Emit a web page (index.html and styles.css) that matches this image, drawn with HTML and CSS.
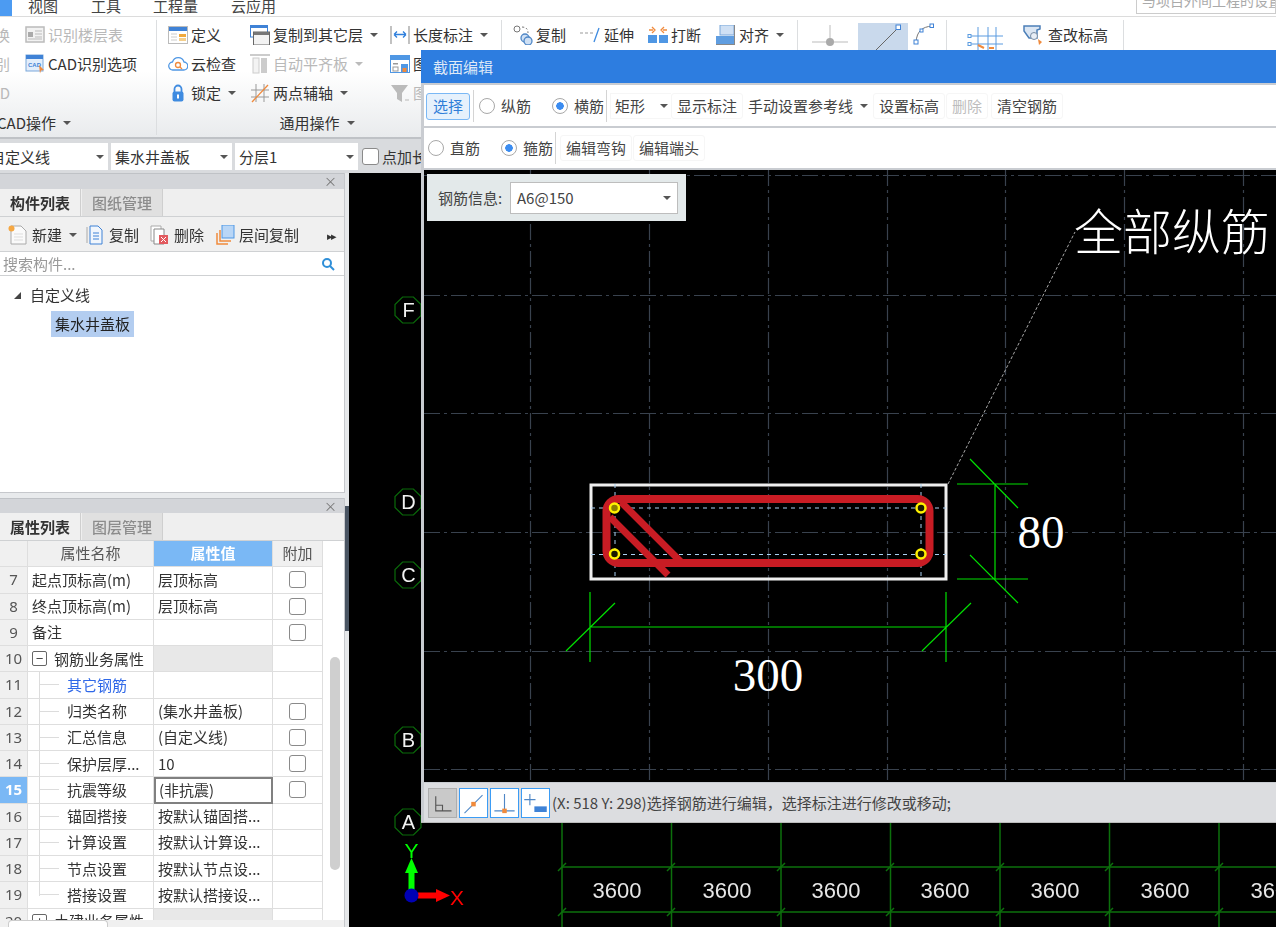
FILE: index.html
```html
<!DOCTYPE html>
<html lang="zh-CN">
<head>
<meta charset="utf-8">
<title>截面编辑</title>
<link rel="stylesheet" href="styles.css">
</head>
<body>
<div class="page">
  <header class="menubar">
    <span class="menu-active"></span>
    <span class="menu-item m1">视图</span>
    <span class="menu-item m2">工具</span>
    <span class="menu-item m3">工程量</span>
    <span class="menu-item m4">云应用</span>
    <span class="top-search">与项目外间工程的设置</span>
  </header>

  <section class="ribbon">
    <div class="group g1">
      <div class="rows rows-g1">
        <span class="cut off">换</span>
        <span class="item off"><svg class="ico" viewBox="0 0 20 20"><rect x="1" y="2" width="18" height="15" fill="#f2f2f2" stroke="#bbb" stroke-width="1.5"/><rect x="3" y="7" width="5" height="5" fill="#aaa"/><path d="M10 6h7M10 9h7M10 12h7M3 14h14" stroke="#bbb"/></svg>识别楼层表</span>
        <span class="cut off">别</span>
        <span class="item"><svg class="ico" viewBox="0 0 20 20"><rect x="1" y="1" width="17" height="16" fill="#e3eefb" stroke="#7aa7da"/><rect x="1" y="1" width="17" height="4" fill="#3f82d6"/><text x="3" y="13" class="svg-cad">CAD</text><path d="M14 11l5 5-3 .5-1 3z" fill="#f08a3c"/></svg>CAD识别选项</span>
        <span class="cut off">D</span>
      </div>
      <div class="group-title g1-title">CAD操作<i class="caret"></i></div>
    </div>

    <div class="group g2">
      <div class="rows rows-g2">
        <span class="item"><svg class="ico" viewBox="0 0 20 20"><rect x=".5" y="1.5" width="19" height="17" fill="#fff" stroke="#bbb"/><rect x="1" y="2" width="18" height="4" fill="#3f82d6"/><path d="M3 9h6M3 12h6M3 15h6" stroke="#ccc"/><rect x="11" y="9" width="7" height="3" fill="#f0a93c"/><rect x="11" y="13" width="7" height="3" fill="#f4cf8c"/></svg>定义</span>
        <span class="item"><svg class="ico" viewBox="0 0 20 20"><rect x=".5" y="0" width="17" height="12" fill="#fff" stroke="#3f82d6"/><rect x="1" y="0" width="16" height="3" fill="#3f82d6"/><rect x="3.5" y="7" width="16" height="13" fill="#f3f3f3" stroke="#666"/><rect x="4" y="7" width="15" height="3" fill="#777"/></svg>复制到其它层<i class="caret"></i></span>
        <span class="item"><svg class="ico" viewBox="0 0 20 20"><path d="M1 1v18M19 1v18" stroke="#999" stroke-width="1.2"/><path d="M4 9.500h12M4 9.500l3-3M4 9.500l3 3M16 9.500l-3-3M16 9.500l-3 3" stroke="#2f7fdc" stroke-width="1.3" fill="none"/></svg>长度标注<i class="caret"></i></span>

        <span class="item"><svg class="ico" viewBox="0 0 20 20"><path d="M5 16a4 4 0 0 1-.5-8 6 6 0 0 1 11.500 0 4 4 0 0 1-.5 8z" fill="#fff" stroke="#4f97e4" stroke-width="1.3"/><circle cx="10" cy="11" r="2.500" fill="none" stroke="#f08a3c" stroke-width="1.300"/><path d="M12 13l2 2" stroke="#f08a3c" stroke-width="1.300"/></svg>云检查</span>
        <span class="item off"><svg class="ico" viewBox="0 0 20 20"><path d="M0 1h20" stroke="#ccc" stroke-width="2"/><rect x="3" y="4" width="6" height="15" fill="#f3f3f3" stroke="#ccc"/><rect x="11" y="4" width="6" height="15" fill="#ccc"/></svg>自动平齐板<i class="caret light"></i></span>
        <span class="item"><svg class="ico" viewBox="0 0 20 20"><rect x=".5" y="1.500" width="19" height="17" fill="#fff" stroke="#4f97e4"/><rect x="1" y="2" width="18" height="4" fill="#4f97e4"/><rect x="3" y="9" width="5" height="1.500" fill="#999"/><rect x="3" y="13" width="5" height="4" fill="none" stroke="#999"/><rect x="11" y="10" width="7" height="8" fill="#4f97e4"/><rect x="12.500" y="14" width="4" height="4" fill="#f08a3c"/></svg>图</span>

        <span class="item"><svg class="ico" viewBox="0 0 20 20"><path d="M6.500 9V6a3.500 3.500 0 0 1 7 0v3" fill="none" stroke="#3f8be0" stroke-width="1.800"/><rect x="4.500" y="8.500" width="11" height="10" rx="2" fill="#3f8be0"/><rect x="9" y="11.500" width="2" height="4" fill="#fff"/></svg>锁定<i class="caret"></i></span>
        <span class="item"><svg class="ico" viewBox="0 0 20 20"><path d="M6 1v18M14 1v18M1 7h18M1 14h18" stroke="#999" fill="none"/><path d="M2 19L18 2" stroke="#f08a3c" stroke-width="1.300"/></svg>两点辅轴<i class="caret"></i></span>
        <span class="item off"><svg class="ico" viewBox="0 0 20 20"><path d="M1 2h17l-6 8v9l-5-3v-6z" fill="#bbb"/><path d="M15 17h4" stroke="#ccc" stroke-width="1.500"/></svg>图</span>
      </div>
      <div class="group-title">通用操作<i class="caret"></i></div>
    </div>

    <div class="group g3">
      <div class="single">
        <span class="item w-copy"><svg class="ico" viewBox="0 0 20 20"><circle cx="4" cy="4" r="3" fill="#fff" stroke="#777"/><path d="M9 2c4 0 6 2 6 6" stroke="#777" fill="none" stroke-dasharray="2 2"/><circle cx="12" cy="13" r="4" fill="#cfe0f4" stroke="#4f87c6" stroke-width="1.300"/><circle cx="15" cy="16" r="4" fill="#cfe0f4" stroke="#4f87c6" stroke-width="1.300"/></svg>复制</span>
        <span class="item w-ext"><svg class="ico wide" viewBox="0 0 21 20"><path d="M0 8h13" stroke="#999" stroke-dasharray="3 2"/><path d="M14 17l5-14" stroke="#3f8be0" stroke-width="1.300"/></svg>延伸</span>
        <span class="item w-brk"><svg class="ico" viewBox="0 0 20 20"><rect x="0" y="10" width="9" height="8" fill="#4f97e4"/><rect x="11" y="10" width="9" height="8" fill="#4f97e4"/><path d="M1 5h4M15 5h4" stroke="#f08a3c" stroke-width="1.500"/><path d="M4 2l3 3-3 3M16 2l-3 3 3 3" fill="none" stroke="#f08a3c" stroke-width="1.300"/></svg>打断</span>
        <span class="item"><svg class="ico" viewBox="0 0 20 20"><rect x="4" y="0" width="14" height="10" fill="#cfe0f4" stroke="#7aa7da"/><rect x="0" y="11" width="18" height="9" fill="#5f9de0"/><path d="M0 19.500h19M18.500 0v20" stroke="#888"/></svg>对齐<i class="caret"></i></span>
      </div>
    </div>

    <div class="group g4">
      <div class="single shapes">
        <svg class="shape-a" viewBox="0 0 38 30"><path d="M18 5v17M0 22h36" stroke="#bbb"/><circle cx="18" cy="22" r="4" fill="#aaa"/></svg>
        <span class="shape-on"><svg viewBox="0 0 50 30"><path d="M15 30L40 5" stroke="#666"/><rect x="38" y="2" width="4.500" height="4.500" fill="#fff" stroke="#3f82d6"/></svg></span>
        <svg class="shape-c" viewBox="0 0 22 22"><path d="M3 19C4 8 9 4 19 3" fill="none" stroke="#777"/><rect x="1" y="17" width="4" height="4" fill="#fff" stroke="#3f82d6"/><rect x="7" y="6" width="3" height="3" fill="#fff" stroke="#3f82d6"/><rect x="17" y="1" width="3.500" height="3.500" fill="#fff" stroke="#3f82d6"/></svg>
      </div>
    </div>

    <div class="group g5">
      <div class="single">
        <svg class="grid-ico" viewBox="0 0 40 30"><path d="M12 7v23M22 7v23M30 7v23M5 16h32M5 24h32" stroke="#5b9be0" fill="none"/><rect x="2" y="14.500" width="3" height="3" fill="#fff" stroke="#5b9be0"/><rect x="2" y="22.500" width="3" height="3" fill="#fff" stroke="#5b9be0"/><path d="M12 25l6 3M23 28h5" stroke="#f08a3c" stroke-width="2"/></svg>
        <span class="item"><svg class="ico" viewBox="0 0 20 20"><path d="M1 1h16v3l-3 1v8H6L1 6z" fill="#dbe6f3" stroke="#4c7fb8" stroke-width="1.500"/><circle cx="11" cy="11" r="3.500" fill="#e8eef6" stroke="#7a8da3"/><path d="M15 14l4 3-3 3z" fill="#f08a3c"/></svg>查改标高</span>
      </div>
    </div>
  </section>

  <section class="selectors">
    <span class="select s1"><span class="cutleft">自定义线</span><i class="caret"></i></span>
    <span class="select s2"><span>集水井盖板</span><i class="caret"></i></span>
    <span class="select s3"><span>分层1</span><i class="caret"></i></span>
    <span class="check sel-check"></span>
    <span class="sel-label">点加长度</span>
  </section>

  <main class="workspace">
    <aside class="side">
      <div class="panel panel-top">
        <div class="panel-head">×</div>
        <div class="tabs"><span class="tab active">构件列表</span><span class="tab">图纸管理</span></div>
        <div class="tools">
          <span class="tool"><svg class="ico" viewBox="0 0 20 20"><path d="M3 1h10l5 5v13H3z" fill="#fafafa" stroke="#aaa"/><path d="M6 9h9M6 12h9M6 15h9" stroke="#ddd"/><circle cx="3.500" cy="3.500" r="3" fill="#f5a742"/></svg>新建<i class="caret"></i></span>
          <span class="tool tool-wide"><svg class="ico" viewBox="0 0 20 20"><path d="M2 2v16" stroke="#aaa"/><path d="M5 1h8l4 4v14H5z" fill="#f1f6fc" stroke="#3f82d6"/><path d="M8 8h6M8 11h6M8 14h6" stroke="#3f82d6"/></svg>复制</span>
          <span class="tool tool-wide"><svg class="ico" viewBox="0 0 20 20"><path d="M1 1h10v15H1z" fill="#fff" stroke="#aaa"/><path d="M4 4h10v15H4z" fill="#fff" stroke="#888"/><rect x="9" y="10" width="9" height="9" fill="#e2595e"/><path d="M11 12l5 5M16 12l-5 5" stroke="#fff"/></svg>删除</span>
          <span class="tool"><svg class="ico" viewBox="0 0 20 20"><rect x="7" y="0" width="12" height="13" fill="#b9d6f6" stroke="#4f97e4"/><path d="M5 5v11h11M2 8v11h11" fill="none" stroke="#f08a3c" stroke-width="1.500"/></svg>层间复制</span>
          <span class="more">▸▸</span>
        </div>
        <div class="search"><span>搜索构件...</span><svg viewBox="0 0 14 14" class="search-ico"><circle cx="6" cy="6" r="4" fill="none" stroke="#2f8fd8" stroke-width="2"/><path d="M9 9l4 4" stroke="#2f8fd8" stroke-width="2"/></svg></div>
        <div class="tree">
          <div class="tree-root"><i class="tree-arrow"></i>自定义线</div>
          <div class="tree-leaf">集水井盖板</div>
        </div>
      </div>

      <div class="panel panel-bottom">
        <div class="panel-head">×</div>
        <div class="tabs"><span class="tab active">属性列表</span><span class="tab">图层管理</span></div>
        <div class="table-wrap">
          <div class="prop-table">
            <div class="th num"></div><div class="th">属性名称</div><div class="th th-on">属性值</div><div class="th">附加</div>

            <div class="num">7</div><div class="td">起点顶标高(m)</div><div class="td">层顶标高</div><div class="td mid"><span class="check"></span></div>
            <div class="num">8</div><div class="td">终点顶标高(m)</div><div class="td">层顶标高</div><div class="td mid"><span class="check"></span></div>
            <div class="num">9</div><div class="td">备注</div><div class="td"></div><div class="td mid"><span class="check"></span></div>
            <div class="num">10</div><div class="td"><span class="toggle">−</span>钢筋业务属性</div><div class="td shade"></div><div class="td"></div>
            <div class="num">11</div><div class="td sub link">其它钢筋</div><div class="td"></div><div class="td"></div>
            <div class="num">12</div><div class="td sub">归类名称</div><div class="td">(集水井盖板)</div><div class="td mid"><span class="check"></span></div>
            <div class="num">13</div><div class="td sub">汇总信息</div><div class="td">(自定义线)</div><div class="td mid"><span class="check"></span></div>
            <div class="num">14</div><div class="td sub">保护层厚...</div><div class="td">10</div><div class="td mid"><span class="check"></span></div>
            <div class="num num-on">15</div><div class="td sub">抗震等级</div><div class="td cell-on">(非抗震)</div><div class="td mid"><span class="check"></span></div>
            <div class="num">16</div><div class="td sub">锚固搭接</div><div class="td">按默认锚固搭...</div><div class="td"></div>
            <div class="num">17</div><div class="td sub">计算设置</div><div class="td">按默认计算设...</div><div class="td"></div>
            <div class="num">18</div><div class="td sub">节点设置</div><div class="td">按默认节点设...</div><div class="td"></div>
            <div class="num">19</div><div class="td sub sub-last">搭接设置</div><div class="td">按默认搭接设...</div><div class="td"></div>
            <div class="num">20</div><div class="td"><span class="toggle">+</span>土建业务属性</div><div class="td shade"></div><div class="td"></div>
          </div>
          <div class="vscroll"><span class="thumb"></span></div>
        </div>
        <div class="hscroll"><span class="hthumb"></span></div>
      </div>
    </aside>
    <div class="splitter"><span class="split-top"></span><span class="split-handle"></span></div>

    <div class="cad">
      <svg class="cad-svg" viewBox="349 172 927 755" aria-label="轴网">
        <defs><polygon id="oct" points="-5.400,-13 5.400,-13 13,-5.400 13,5.400 5.400,13 -5.400,13 -13,5.400 -13,-5.400"/></defs>
        <g class="axis-hex">
          <use href="#oct" x="408" y="310"/>
          <use href="#oct" x="408" y="502"/>
          <use href="#oct" x="408" y="575"/>
          <use href="#oct" x="408" y="740"/>
          <use href="#oct" x="408" y="822"/>
        </g>
        <g class="axis-label">
          <text x="408.500" y="317">F</text><text x="408.500" y="509">D</text><text x="408.500" y="582">C</text><text x="408.500" y="747">B</text><text x="408.500" y="829">A</text>
        </g>
        <g class="grid-green">
          <path d="M562 822V927M671.500 822V927M781 822V927M890.500 822V927M1000 822V927M1109.500 822V927M1219 822V927M562 867H1276M562 912H1276"/>
          <path d="M558 871l8-8M667 871l8-8M777 871l8-8M886 871l8-8M996 871l8-8M1105 871l8-8M1215 871l8-8M558 916l8-8M667 916l8-8M777 916l8-8M886 916l8-8M996 916l8-8M1105 916l8-8M1215 916l8-8"/>
        </g>
        <g class="dim-text">
          <text x="617" y="898">3600</text><text x="727" y="898">3600</text><text x="836" y="898">3600</text><text x="945" y="898">3600</text><text x="1055" y="898">3600</text><text x="1165" y="898">3600</text><text x="1275" y="898">3600</text>
        </g>
        <path d="M411.500 892V872" class="axis-y"/>
        <polygon points="411.500,858 418,873 405,873" class="fill-green"/>
        <path d="M418 895.500H436" class="axis-x"/>
        <polygon points="450,895.500 436,889 436,902" class="fill-red"/>
        <circle cx="411.500" cy="895.500" r="7" class="fill-blue"/>
        <text x="411.500" y="858" class="axis-y-label">Y</text>
        <text x="457" y="905" class="axis-x-label">X</text>
      </svg>
    </div>
  </main>

  <div class="dialog">
    <div class="dlg-title">截面编辑</div>
    <div class="dlg-bar">
      <button class="btn btn-on">选择</button>
      <i class="vsep v1"></i>
      <span class="radio"><i></i>纵筋</span>
      <span class="radio radio-on"><i></i>横筋</span>
      <i class="vsep v2"></i>
      <span class="shape-select"><span>矩形</span><i class="caret"></i></span>
      <button class="btn">显示标注</button>
      <span class="btn-menu">手动设置参考线<i class="caret"></i></span>
      <button class="btn">设置标高</button>
      <button class="btn btn-off">删除</button>
      <button class="btn">清空钢筋</button>
    </div>
    <div class="dlg-bar bar2">
      <span class="radio r0"><i></i>直筋</span>
      <span class="radio radio-on"><i></i>箍筋</span>
      <i class="vsep v3"></i>
      <button class="btn">编辑弯钩</button>
      <button class="btn">编辑端头</button>
    </div>
    <div class="dlg-canvas">
      <div class="rebar-info">
        <label>钢筋信息:</label>
        <span class="rebar-select"><span>A6@150</span><i class="caret"></i></span>
      </div>
      <svg class="section-svg" viewBox="424 170 852 612" aria-label="截面">
        <path class="dashgrid" d="M530.500 170V782M649.500 170V782M768.500 170V782M887.500 170V782M1005.500 170V782M1124.500 170V782M1243.500 170V782M424 175.500H1276M424 295.500H1276M424 413.500H1276M424 532.500H1276M424 651.500H1276M424 769.500H1276"/>
        <rect class="sec-outline" x="591" y="485" width="355" height="94"/>
        <path class="leader" d="M948 484L1075 232"/>
        <g class="ref-lines"><path d="M591 508H946M591 554.500H946M615 484V579M921 484V579"/></g>
        <g class="stirrup">
          <rect x="606.500" y="499" width="323" height="64" rx="12"/>
          <path d="M621 502L681 562M610 517L668 575"/>
        </g>
        <g class="bars">
          <circle cx="614.500" cy="508" r="4.500" class="bar-solid"/><circle cx="614.500" cy="554" r="4.500"/><circle cx="921" cy="508" r="4.500"/><circle cx="921" cy="554" r="4.500"/>
        </g>
        <g class="dim">
          <path d="M590 592V662M946 592V662M590 627H946M566 651L615 603M922 651L971 603"/>
          <path d="M995 484V579M957 484H1028M957 579H1028M970 459L1018 508M970 555L1018 603"/>
        </g>
        <text x="768" y="691" class="big-num">300</text>
        <text x="1041" y="548" class="big-num">80</text>
        <text x="1074" y="250" class="big-cjk">全部纵筋</text>
      </svg>
    </div>
    <div class="dlg-status">
      <span class="st-btn st-off"><svg viewBox="0 0 24 24"><path d="M6 6v13h14M6 14h6v5" fill="none" stroke="#555"/></svg></span>
      <span class="st-btn"><svg viewBox="0 0 24 24"><path d="M4 21L20 5" stroke="#4f87c6"/><rect x="10" y="11" width="4" height="4" fill="#f08a3c"/></svg></span>
      <span class="st-btn"><svg viewBox="0 0 24 24"><path d="M12 4v15M3 19h18" stroke="#4f87c6"/><rect x="10" y="17" width="4" height="4" fill="#f08a3c"/></svg></span>
      <span class="st-btn"><svg viewBox="0 0 24 24"><path d="M7 4v10M2 9h10" stroke="#4f87c6"/><rect x="11" y="15" width="11" height="5" fill="#3f82d6"/></svg></span>
      <span class="st-text">(X: 518 Y: 298)选择钢筋进行编辑，选择标注进行修改或移动;</span>
    </div>
  </div>
</div>
</body>
</html>
```

FILE: styles.css
```css
* { box-sizing: border-box; }
html, body { margin: 0; padding: 0; height: 100%; }
body { overflow: hidden; background: #000; }
.page {
  position: relative; width: 1276px; height: 927px; overflow: hidden;
  display: flex; flex-direction: column;
  font: 15px/20px "Noto Sans CJK SC", "Noto Sans", sans-serif; color: #333;
  filter: blur(.4px);
}
i { font-style: normal; }
.caret { display: inline-block; width: 0; height: 0; border-top: 4px solid #555; border-left: 4px solid transparent; border-right: 4px solid transparent; margin-left: 7px; flex: none; }
.caret.light { border-top-color: #bbb; }
.ico { width: 20px; height: 20px; flex: none; margin-right: 3px; }
.ico.wide { width: 21px; }
.off { color: #b9b9b9; }
.svg-cad { font: 700 6px "Liberation Sans", sans-serif; fill: #3f82d6; }

/* menu */
.menubar { height: 17px; flex: none; background: #fff; border-bottom: 1px solid #dcdcdc; display: flex; overflow: hidden; position: relative; }
.menu-active { width: 12px; height: 16px; background: #4c9bf2; }
.menu-item { line-height: 12px; color: #444; }
.m1 { margin-left: 16px; }
.m2 { margin-left: 33px; }
.m3 { margin-left: 32px; }
.m4 { margin-left: 33px; }
.top-search { margin-left: auto; width: 140px; height: 14px; border: 1px solid #ccc; border-top: 0; line-height: 0; font-size: 14px; color: #aaa; white-space: nowrap; overflow: hidden; padding-left: 5px; }

/* ribbon */
.ribbon { height: 122px; flex: none; display: flex; background: linear-gradient(#fff 45%, #e9ebed); border-bottom: 2px solid #bfc2c6; padding-top: 3px; }
.group { flex: none; height: 115px; border-right: 1px solid #dcdee0; display: flex; flex-direction: column; }
.g1 { width: 157px; }
.g2 { width: 345px; }
.g3 { width: 296px; }
.g4 { width: 149px; }
.g5 { width: 177px; }
.rows { display: grid; grid-auto-rows: 29px; height: 87px; flex: none; }
.rows-g1 { grid-template-columns: 10px auto; column-gap: 15px; justify-content: start; }
.rows-g2 { grid-template-columns: 82px 140px auto; padding-left: 11px; }
.item { display: flex; align-items: center; white-space: nowrap; }
.cut { display: flex; align-items: center; justify-content: flex-end; overflow: hidden; }
.group-title { margin-top: 3px; height: 26px; display: flex; align-items: center; justify-content: center; padding-right: 24px; }
.group-title .caret { margin-left: 7px; }
.g1-title { justify-content: flex-start; margin-left: -3px; padding: 0; }
.single { display: flex; align-items: flex-start; height: 29px; }
.g3 .single { padding-left: 11px; }
.w-copy { margin-right: 14px; }
.w-ext { margin-right: 14px; }
.w-brk { margin-right: 15px; }
.g3 .item { height: 29px; }
.shapes { padding-left: 14px; }
.shape-a { width: 38px; height: 30px; flex: none; }
.shape-on { width: 50px; height: 29px; margin: 3px 0 0 8px; background: #c9d9ec; overflow: hidden; display: block; flex: none; }
.shape-on svg { width: 50px; height: 30px; display: block; }
.shape-c { width: 22px; height: 22px; margin: 3px 0 0 5px; flex: none; }
.g5 .single { padding-left: 19px; }
.grid-ico { width: 40px; height: 30px; flex: none; margin-right: 17px; }
.g5 .item { height: 29px; }
.g5 .ico { margin-right: 5px; }

/* selectors */
.selectors { height: 34px; flex: none; display: flex; align-items: center; background: #d9dbde; padding-top: 1px; overflow: hidden; }
.select { height: 27px; background: #fff; display: flex; align-items: center; justify-content: space-between; padding: 0 4px; margin-right: 3px; flex: none; }
.s1 { width: 108px; }
.s2 { width: 121px; }
.s3 { width: 123px; }
.cutleft { margin-left: -14px; }
.sel-check { margin: 0 3px 0 1px; width: 17px; height: 17px; background: #fff; }
.sel-label { white-space: nowrap; }
.check { display: block; width: 17px; height: 17px; border: 1px solid #8a8a8a; border-radius: 3px; background: #fff; }

/* workspace */
.workspace { flex: 1; min-height: 0; display: flex; }
.side { width: 345px; flex: none; background: #e8eaec; display: flex; flex-direction: column; gap: 5px; }
.panel { display: flex; flex-direction: column; background: #f0f0f0; border-right: 1px solid #c6c8cc; min-height: 0; }
.panel-top { height: 320px; flex: none; }
.panel-bottom { flex: 1; }
.panel-head { height: 15px; flex: none; background: #d3d5d9; border-top: 1px solid #bfc2c6; text-align: right; padding-right: 7px; font-size: 13px; line-height: 14px; color: #777; }
.panel-top .panel-head { height: 16px; }
.tabs { height: 28px; flex: none; display: flex; border-bottom: 1px solid #cfd1d3; background: #efefef; }
.tab { width: 81px; margin-right: 1px; display: flex; align-items: center; justify-content: center; background: #e0e0e0; color: #8c8c8c; font-size: 15px; border-right: 1px solid #cfcfcf; font-weight: 500; }
.tab.active { background: #f0f0f0; color: #333; font-weight: 700; }
.tools { height: 35px; flex: none; display: flex; align-items: center; padding: 2px 0 0 8px; border-bottom: 1px solid #cfd1d3; position: relative; }
.tool { display: flex; align-items: center; margin-right: 8px; white-space: nowrap; }
.tool-wide { margin-right: 11px; }
.tool .ico { margin-right: 4px; }
.tool .caret { margin-left: 7px; }
.more { margin-left: auto; font-size: 11px; letter-spacing: -2px; margin-right: 9px; color: #333; }
.search { height: 24px; flex: none; background: #fff; border-bottom: 1px solid #cfd1d3; display: flex; align-items: center; justify-content: space-between; padding: 0 9px 0 3px; color: #999; }
.search-ico { width: 14px; height: 14px; }
.tree { flex: 1; background: #fff; border-bottom: 1px solid #c6c8cc; padding-top: 8px; }
.tree-root { display: flex; align-items: center; padding-left: 14px; height: 22px; }
.tree-arrow { width: 0; height: 0; border-bottom: 7px solid #444; border-left: 7px solid transparent; margin-right: 9px; }
.tree-leaf { margin: 5px 0 0 51px; width: 83px; height: 26px; line-height: 25px; text-align: center; background: #b3cdf0; color: #222; }

.table-wrap { flex: 1; min-height: 0; display: flex; overflow: hidden; }
.prop-table { width: 324px; height: 379px; overflow: hidden; flex: none; display: grid; grid-template-columns: 28px 126px 119px 50px; grid-auto-rows: 26.25px; background: #fff; align-content: start; }
.th { background: #f0f0f0; border-right: 1px solid #dedede; border-bottom: 1px solid #dedede; text-align: center; line-height: 24px; color: #555; }
.th-on { background: #7ab8f5; color: #fff; font-weight: 700; }
.num { background: #f0f0f0; border-right: 1px solid #dedede; border-bottom: 1px solid #dedede; text-align: center; line-height: 25px; color: #555; font-family: "Noto Sans", sans-serif; font-size: 15px; }
.num-on { background: #7ab8f5; color: #fff; font-weight: 700; }
.td { position: relative; border-right: 1px solid #dedede; border-bottom: 1px solid #dedede; padding-left: 4px; line-height: 24px; white-space: nowrap; overflow: hidden; background: #fff; color: #333; display: flex; align-items: center; }
.mid { justify-content: center; padding: 0; }
.shade { background: #e8e8e8; }
.link { color: #2f68e8; }
.toggle { width: 15px; height: 15px; border: 1px solid #666; border-radius: 2px; line-height: 12px; text-align: center; font-size: 13px; margin-right: 7px; flex: none; background: #fff; }
.sub { padding-left: 39px; }
.sub::before { content: ""; position: absolute; left: 11px; top: 0; bottom: 0; border-left: 1px solid #dcdcdc; }
.sub::after { content: ""; position: absolute; left: 11px; width: 20px; top: 12px; border-top: 1px solid #dcdcdc; }
.sub-last::before { bottom: 12px; }
.cell-on { border: 2px solid #808080; padding-left: 3px; }
.vscroll { flex: 1; background: #fff; padding: 116px 0 0 6px; }
.thumb { display: block; width: 10px; height: 213px; background: #cfcfcf; border-radius: 5px; }
.hscroll { height: 7px; flex: none; background: #f0f0f0; }
.hthumb { display: block; width: 100px; height: 7px; margin-left: 8px; background: #fff; border: 1px solid #ccc; border-radius: 4px 4px 0 0; border-bottom: 0; }

.splitter { width: 4px; flex: none; background: #e6e8ea; }
.split-top { display: block; height: 333px; }
.split-handle { display: block; height: 125px; background: #4a5563; }

.cad { flex: 1; background: #000; min-width: 0; }
.cad-svg { display: block; position: absolute; left: 349px; top: 172px; width: 927px; height: 755px; }
.axis-hex use { fill: #000; stroke: #0a6a0a; stroke-width: 1.200; }
.axis-label text { fill: #f2f2f2; font: 20px "Liberation Sans Narrow", "Liberation Sans", sans-serif; text-anchor: middle; }
.grid-green path { stroke: #0c700c; stroke-width: 1.500; fill: none; }
.dim-text text { fill: #e6e6e6; font: 22px "Liberation Sans Narrow", "Liberation Sans", sans-serif; text-anchor: middle; }
.axis-y { stroke: #00ff00; stroke-width: 6; }
.axis-x { stroke: #ff0000; stroke-width: 6; }
.fill-green { fill: #00ff00; }
.fill-red { fill: #ff0000; }
.fill-blue { fill: #0000b4; }
.axis-y-label { fill: #00ff00; font: 21px "Liberation Sans Narrow", "Liberation Sans", sans-serif; text-anchor: middle; }
.axis-x-label { fill: #ff0000; font: 21px "Liberation Sans Narrow", "Liberation Sans", sans-serif; text-anchor: middle; }

/* dialog */
.dialog { position: absolute; left: 421px; top: 50px; width: 870px; height: 773px; background: #c9ccd1; padding: 0 0 1px 3px; display: flex; flex-direction: column; border-bottom: 1px solid #bbb; }
.dlg-title { height: 33px; margin-left: -3px; flex: none; background: #2d7de0; color: #dfe9f7; padding-left: 12px; line-height: 33px; font-size: 15px; }
.dlg-bar { height: 41px; margin-top: 2px; flex: none; background: #fff; display: flex; align-items: center; padding-left: 2px; padding-top: 1px; color: #444; }
.bar2 { height: 40px; padding: 0 0 1px 4px; }
.bar2 .btn + .btn { margin-left: 1px; }
.btn { height: 26px; padding: 0 5px; margin: 0; border: 1px solid #f6f6f6; border-radius: 3px; background: #fff; font: inherit; color: #444; flex: none; white-space: nowrap; }
.btn-on { width: 44px; height: 27px; background: #e6f1fc; border-color: #7ab8f5; color: #2f7ed8; padding: 0; }
.btn-off { color: #bdbdbd; margin: 0 3px 0 1px; }
.vsep { width: 1px; height: 32px; background: #d4d4d4; flex: none; }
.v1 { margin: 0 5px 0 3px; }
.v2 { margin: 0 3px 0 2px; }
.v3 { margin: 0 4px 0 2px; }
.radio { display: flex; align-items: center; margin-right: 21px; }
.radio:last-of-type { margin-right: 0; }
.radio i { width: 16px; height: 16px; border: 1.500px solid #a8a8a8; border-radius: 50%; margin-right: 6px; background: #fff; flex: none; position: relative; }
.radio-on { margin-right: 0; }
.radio-on i { background: radial-gradient(circle, #3b8cf0 0 3.500px, #fff 4px); }
.r0 { margin-right: 21px; }
.shape-select { width: 61px; height: 26px; padding-left: 4px; display: flex; align-items: center; justify-content: space-between; border: 1px solid #f6f6f6; border-right: 0; flex: none; }
.shape-select .caret { margin-right: 3px; }
.btn-menu { display: flex; align-items: center; padding-left: 5px; width: 130px; flex: none; white-space: nowrap; }
.dlg-canvas { margin-top: 2px; height: 612px; flex: none; background: #000; position: relative; }
.section-svg { display: block; width: 852px; height: 612px; }
.rebar-info { position: absolute; left: 3px; top: 4px; width: 259px; height: 47px; background: #e3e9ea; display: flex; align-items: center; padding-left: 11px; font-size: 15px; color: #444; }
.rebar-info label { width: 72px; flex: none; }
.rebar-select { width: 168px; height: 32px; background: #fff; border: 1px solid #bdbdbd; display: flex; align-items: center; justify-content: space-between; padding: 0 6px; flex: none; }
.dashgrid { stroke: #39424e; stroke-width: 1.200; stroke-dasharray: 16 4 3 4; fill: none; }
.sec-outline { fill: none; stroke: #efefef; stroke-width: 3; }
.leader { stroke: #a8a8a8; stroke-dasharray: 3 2; fill: none; }
.ref-lines path { stroke: #a9d0f2; stroke-dasharray: 4 4; fill: none; }
.stirrup rect { fill: none; stroke: #c81c24; stroke-width: 8; }
.stirrup path { fill: none; stroke: #c81c24; stroke-width: 7; }
.bars circle { fill: #1a1a00; stroke: #fff200; stroke-width: 2.500; }
.bars .bar-solid { fill: #8a8000; }
.dim path { stroke: #00e000; stroke-width: 1.200; fill: none; }
.big-num { fill: #fff; font: 47px "Liberation Serif", serif; text-anchor: middle; }
.big-cjk { fill: #fff; font: 300 49px "Noto Sans CJK SC", sans-serif; }

.dlg-status { height: 39px; margin-top: 1px; flex: none; background: #dcdde0; display: flex; align-items: center; padding-left: 4px; gap: 2px; font-size: 15px; color: #444; }
.st-btn { width: 29px; height: 30px; background: #fff; border: 1px solid #3b9cf5; flex: none; display: block; }
.st-btn svg { width: 27px; height: 28px; display: block; }
.st-off { background: #c9c9c9; border-color: #adadad; }
.st-text { white-space: nowrap; margin-left: 0; }
```
